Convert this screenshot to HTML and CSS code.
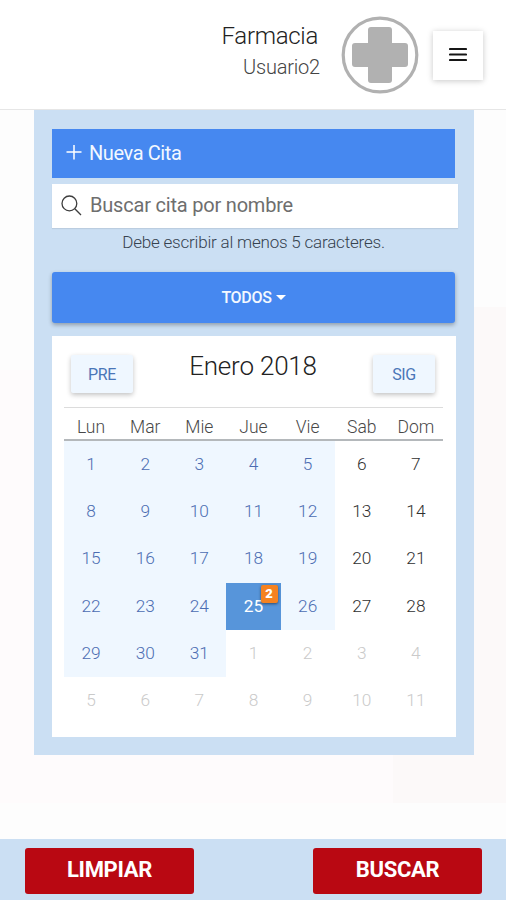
FILE: index.html
```html
<!DOCTYPE html>
<html lang="es">
<head>
<meta charset="utf-8">
<title>Farmacia</title>
<link rel="stylesheet" href="styles.css">
</head>
<body>
<header class="topbar">
  <div class="account">
    <div class="account-name"><span>Farmacia</span></div>
    <div class="account-user"><span>Usuario2</span></div>
  </div>
  <svg class="logo" viewBox="0 0 78 78" width="78" height="78">
    <circle cx="39" cy="39" r="36.8" fill="#fff" stroke="#b1b1b1" stroke-width="3.2"/>
    <path fill="#b1b1b1" d="M30 11H48Q51 11 51 14V27H64Q67 27 67 30V48Q67 51 64 51H51V64Q51 67 48 67H30Q27 67 27 64V51H14Q11 51 11 48V30Q11 27 14 27H27V14Q27 11 30 11Z"/>
  </svg>
  <button class="menu" aria-label="Menú">
    <svg viewBox="0 0 18 15" width="18" height="15"><path d="M1 2H17M1 7.5H17M1 13H17" stroke="#161616" stroke-width="2.1" stroke-linecap="round"/></svg>
  </button>
</header>
<main class="content">
  <section class="panel">
    <button class="new">
      <svg viewBox="0 0 16 16" width="16" height="16"><path d="M.5 7H15.5M8 0V14.5" stroke="#fff" stroke-width="1.5"/></svg>
      <span>Nueva Cita</span>
    </button>
    <div class="search">
      <svg viewBox="0 0 21 21" width="21" height="21" fill="none" stroke="#3d3d3d" stroke-width="1.3"><circle cx="8.4" cy="8.4" r="7.4"/><path d="M13.8 13.8L20 20"/></svg>
      <span>Buscar cita por nombre</span>
    </div>
    <p class="hint"><span>Debe escribir al menos 5 caracteres.</span></p>
    <button class="filter"><span>TODOS</span><i class="caret"></i></button>
    <div class="calendar">
      <div class="cal-head">
        <button class="nav">PRE</button>
        <h2><span>Enero 2018</span></h2>
        <button class="nav">SIG</button>
      </div>
      <div class="weekdays"><span>Lun</span><span>Mar</span><span>Mie</span><span>Jue</span><span>Vie</span><span>Sab</span><span>Dom</span></div>
      <div class="days">
        <span class="on">1</span><span class="on">2</span><span class="on">3</span><span class="on">4</span><span class="on">5</span><span>6</span><span>7</span>
        <span class="on">8</span><span class="on">9</span><span class="on">10</span><span class="on">11</span><span class="on">12</span><span>13</span><span>14</span>
        <span class="on">15</span><span class="on">16</span><span class="on">17</span><span class="on">18</span><span class="on">19</span><span>20</span><span>21</span>
        <span class="on">22</span><span class="on">23</span><span class="on">24</span><span class="on today">25<b class="badge">2</b></span><span class="on">26</span><span>27</span><span>28</span>
        <span class="on">29</span><span class="on">30</span><span class="on">31</span><span class="out">1</span><span class="out">2</span><span class="out">3</span><span class="out">4</span>
        <span class="out">5</span><span class="out">6</span><span class="out">7</span><span class="out">8</span><span class="out">9</span><span class="out">10</span><span class="out">11</span>
      </div>
    </div>
  </section>
</main>
<footer class="actions">
  <button class="action">LIMPIAR</button>
  <button class="action">BUSCAR</button>
</footer>
</body>
</html>
```
FILE: styles.css
```css
* { box-sizing: border-box; }
body {
  margin: 0;
  height: 900px;
  display: flex;
  flex-direction: column;
  overflow: hidden;
  background: #fdfdfd;
  font-family: Roboto, "Liberation Sans", sans-serif;
  color: #222;
}
button { border: 0; padding: 0; font-family: inherit; }

.topbar {
  flex: none;
  height: 110px;
  display: flex;
  justify-content: flex-end;
  padding-right: 23px;
  background: #fff;
  border-bottom: 1px solid #e6e6e6;
}
.account { margin-right: 21px; padding-top: 20px; text-align: right; font-weight: 300; }
.account-name { padding-right: 2px; font-size: 24px; line-height: 32px; letter-spacing: -0.3px; }
.account-user { font-size: 20px; line-height: 31px; letter-spacing: -0.2px; color: #444; }
.logo { margin: 16px 14px 0 0; }
.menu {
  width: 50px;
  height: 49px;
  margin-top: 31px;
  padding-bottom: 2px;
  display: flex;
  align-items: center;
  justify-content: center;
  background: #fff;
  box-shadow: 0 1px 6px rgba(0, 0, 0, .22);
}

.content {
  flex: 1;
  padding-left: 34px;
  background:
    linear-gradient(#fcf9f9, #fcf9f9) 100% 197px / 113px 496px no-repeat,
    linear-gradient(#fefbfc, #fefbfc) 0 260px / 400px 433px no-repeat;
}
.panel {
  width: 440px;
  height: 645px;
  padding: 19px 18px 0;
  background: #cbdff3;
}
.new {
  width: 403px;
  height: 49px;
  padding: 0 0 2px 14px;
  display: flex;
  align-items: center;
  gap: 7px;
  background: #4688f0;
  color: #f3f8ff;
  font-size: 20px;
  letter-spacing: -0.4px;
}
.search {
  width: 406px;
  height: 44px;
  margin-top: 6px;
  padding: 0 0 2px 9px;
  display: flex;
  align-items: center;
  gap: 8px;
  background: #fff;
  box-shadow: 0 1px 1px rgba(0, 0, 0, .08);
  color: #6e6e6e;
  font-size: 20px;
  letter-spacing: -0.2px;
}
.hint {
  margin: 0;
  height: 44px;
  padding: 3px 1px 0 0;
  text-align: center;
  font-size: 17px;
  line-height: 22px;
  font-weight: 300;
  letter-spacing: -0.2px;
  color: #36424f;
}
.filter {
  width: 403px;
  height: 51px;
  display: flex;
  align-items: center;
  justify-content: center;
  gap: 4px;
  border-radius: 3px;
  background: #4688f0;
  box-shadow: 0 2px 4px rgba(0, 0, 0, .3);
  color: #f3f8ff;
  font-size: 16px;
  font-weight: 500;
  letter-spacing: -0.3px;
}
.caret { border: 5px solid transparent; border-top-color: #fff; border-bottom: 0; }

.calendar {
  width: 404px;
  height: 401px;
  margin-top: 13px;
  padding: 0 13px 0 12px;
  background: #fff;
}
.cal-head {
  height: 72px;
  padding: 19px 8px 0 7px;
  display: flex;
  justify-content: space-between;
  align-items: flex-start;
  border-bottom: 1px solid #dcdcdc;
}
.cal-head h2 { margin: -5px 0 0; font-size: 26px; line-height: 32px; font-weight: 300; letter-spacing: -0.2px; }
.nav {
  width: 62px;
  height: 38px;
  border-radius: 2px;
  background: #eff7ff;
  box-shadow: 0 2px 5px rgba(0, 0, 0, .24);
  color: #4a76b8;
  font-size: 16px;
  letter-spacing: -0.4px;
}
.weekdays {
  height: 33px;
  padding-top: 7px;
  display: grid;
  grid-template-columns: repeat(7, 1fr);
  border-bottom: 2px solid #b4b8bb;
  text-align: center;
  font-size: 17.5px;
  line-height: 24px;
  font-weight: 300;
  color: #484848;
}
.days {
  display: grid;
  grid-template-columns: repeat(7, 1fr);
  grid-auto-rows: 47.2px;
  text-align: center;
  font-size: 17.3px;
  line-height: 47px;
  font-weight: 300;
  color: #303030;
}
.on { background: #eff7ff; color: #4c6db2; }
.out { color: #cacaca; }
.today { position: relative; background: #5795da; color: #fff; font-weight: 400; }
.badge {
  position: absolute;
  top: 2px;
  right: 3px;
  width: 17px;
  height: 18px;
  border-radius: 2px;
  background: #f58220;
  box-shadow: 0 1px 3px rgba(0, 0, 0, .5);
  font-size: 13px;
  line-height: 17px;
  font-weight: 900;
}

.actions {
  flex: none;
  height: 61px;
  padding: 9px 24px 0 25px;
  display: flex;
  justify-content: space-between;
  background: #cbdff3;
}
.action {
  width: 169px;
  height: 46px;
  padding-bottom: 3px;
  border-radius: 3px;
  background: #b90812;
  color: #fff;
  font-size: 22px;
  font-weight: 700;
  letter-spacing: -0.3px;
}
```
